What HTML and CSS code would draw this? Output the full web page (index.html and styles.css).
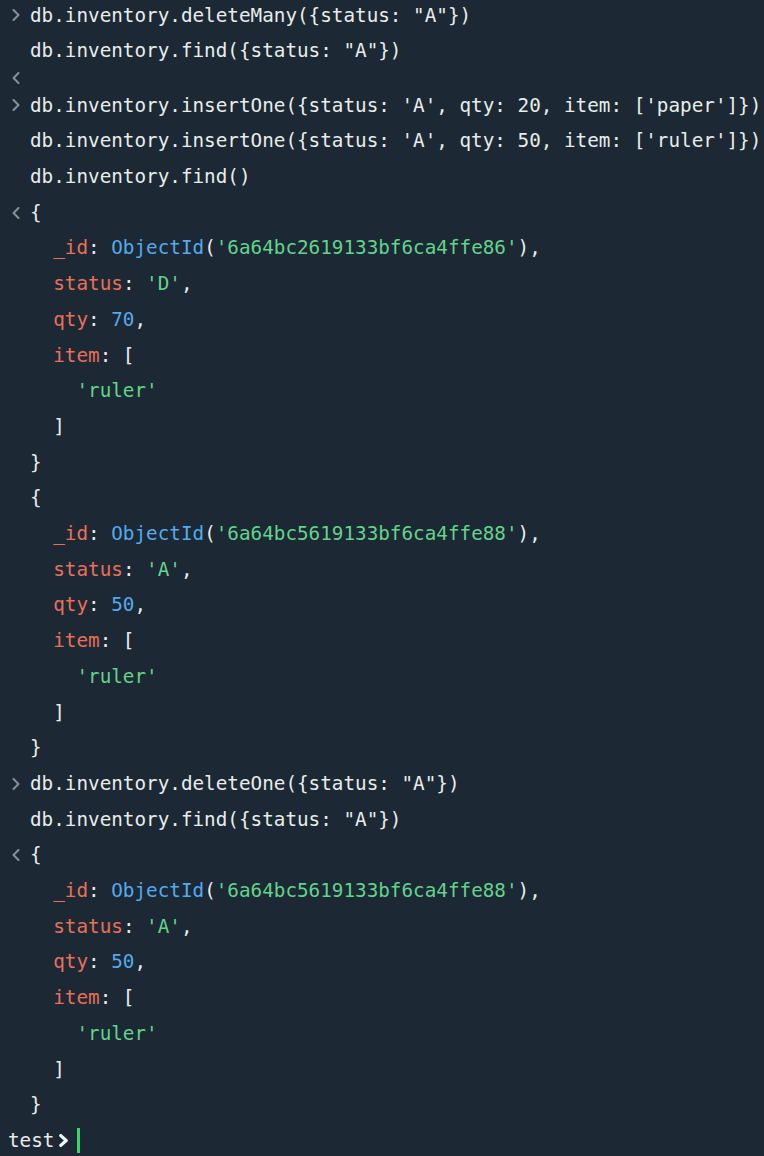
FILE: index.html
```html
<!DOCTYPE html>
<html lang="en">
<head>
<meta charset="utf-8">
<title>mongosh</title>
<link rel="stylesheet" href="styles.css">
</head>
<body>
<main class="shell">
  <div class="entry">
    <div class="gutter"><svg class="chev" viewBox="0 0 10 12"><polyline points="2.5,1 7.5,6 2.5,11"/></svg></div>
    <pre class="code">db.inventory.deleteMany({status: "A"})
db.inventory.find({status: "A"})</pre>
  </div>
  <div class="entry empty">
    <div class="gutter"><svg class="chev" viewBox="0 0 10 12"><polyline points="7.5,1 2.5,6 7.5,11"/></svg></div>
  </div>
  <div class="entry">
    <div class="gutter"><svg class="chev" viewBox="0 0 10 12"><polyline points="2.5,1 7.5,6 2.5,11"/></svg></div>
    <pre class="code">db.inventory.insertOne({status: 'A', qty: 20, item: ['paper']})
db.inventory.insertOne({status: 'A', qty: 50, item: ['ruler']})
db.inventory.find()</pre>
  </div>
  <div class="entry">
    <div class="gutter"><svg class="chev" viewBox="0 0 10 12"><polyline points="7.5,1 2.5,6 7.5,11"/></svg></div>
    <pre class="code">{
  <span class="k">_id</span>: <span class="n">ObjectId</span>(<span class="s">'6a64bc2619133bf6ca4ffe86'</span>),
  <span class="k">status</span>: <span class="s">'D'</span>,
  <span class="k">qty</span>: <span class="n">70</span>,
  <span class="k">item</span>: [
    <span class="s">'ruler'</span>
  ]
}
{
  <span class="k">_id</span>: <span class="n">ObjectId</span>(<span class="s">'6a64bc5619133bf6ca4ffe88'</span>),
  <span class="k">status</span>: <span class="s">'A'</span>,
  <span class="k">qty</span>: <span class="n">50</span>,
  <span class="k">item</span>: [
    <span class="s">'ruler'</span>
  ]
}</pre>
  </div>
  <div class="entry">
    <div class="gutter"><svg class="chev" viewBox="0 0 10 12"><polyline points="2.5,1 7.5,6 2.5,11"/></svg></div>
    <pre class="code">db.inventory.deleteOne({status: "A"})
db.inventory.find({status: "A"})</pre>
  </div>
  <div class="entry">
    <div class="gutter"><svg class="chev" viewBox="0 0 10 12"><polyline points="7.5,1 2.5,6 7.5,11"/></svg></div>
    <pre class="code">{
  <span class="k">_id</span>: <span class="n">ObjectId</span>(<span class="s">'6a64bc5619133bf6ca4ffe88'</span>),
  <span class="k">status</span>: <span class="s">'A'</span>,
  <span class="k">qty</span>: <span class="n">50</span>,
  <span class="k">item</span>: [
    <span class="s">'ruler'</span>
  ]
}</pre>
  </div>
  <div class="prompt">
    <span class="db">test</span>
    <svg class="prompt-chev" viewBox="0 0 10 12"><polyline points="2.5,1.5 7.5,6 2.5,10.5"/></svg>
    <span class="cursor"></span>
  </div>
</main>
</body>
</html>
```

FILE: styles.css
```css
html, body {
  margin: 0;
  padding: 0;
  background: #1c2833;
}

body {
  width: 764px;
  height: 1156px;
  overflow: hidden;
}

.shell {
  margin-top: -2.4px;
  padding-left: 8px;
  font-family: "DejaVu Sans Mono", "Liberation Mono", monospace;
  font-size: 19.3px;
  line-height: 35.7px;
  color: #e8edeb;
}

.entry {
  display: flex;
  align-items: flex-start;
}

.gutter {
  flex: none;
  width: 22px;
  height: 35.7px;
  display: flex;
  align-items: center;
}

.empty .gutter {
  height: 18.6px;
}

.chev {
  width: 10px;
  height: 12px;
  margin-left: 3px;
  fill: none;
  stroke: #86919a;
  stroke-width: 2;
  stroke-linecap: round;
  stroke-linejoin: round;
}

.code {
  margin: 0;
  font: inherit;
  white-space: pre;
}

.k { color: #e8705a; }
.n { color: #55aaee; }
.s { color: #62d48c; }

.prompt {
  display: flex;
  align-items: center;
  height: 35.7px;
}

.prompt-chev {
  width: 11px;
  height: 13px;
  margin-left: 4px;
  fill: none;
  stroke: #f4f6f5;
  stroke-width: 3;
  stroke-linecap: round;
  stroke-linejoin: round;
}

.cursor {
  width: 3px;
  height: 25px;
  margin-left: 8px;
  background: #3fd36b;
}
```
